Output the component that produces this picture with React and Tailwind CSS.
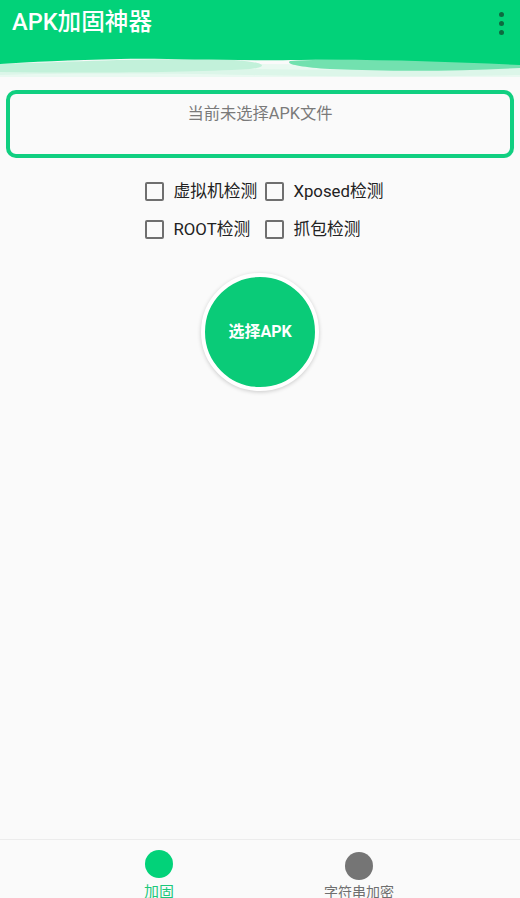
import React from "react";

const font = { fontFamily: "Roboto, 'Noto Sans CJK SC', sans-serif" };

function Check({ label }) {
  return (
    <label className="flex items-center gap-[9px]">
      <span className="h-[19px] w-[19px] shrink-0 rounded-[2px] border-2 border-[#6f6f6f]" />
      <span className="text-[16.8px] text-[#222]">{label}</span>
    </label>
  );
}

export default function App() {
  return (
    <div className="flex h-[898px] w-[520px] flex-col overflow-hidden bg-[#fafafa]" style={font}>
      {/* Toolbar */}
      <div className="flex h-[55px] items-start justify-between bg-[#02d279] pl-[12px] pr-[16px] pt-[6px]">
        <h1 className="text-[23.6px] leading-[32px] font-medium text-white">APK加固神器</h1>
        <div className="mt-[6px] flex flex-col gap-[4px]">
          <span className="h-[5px] w-[5px] rounded-full bg-[#0e6a40]" />
          <span className="h-[5px] w-[5px] rounded-full bg-[#0e6a40]" />
          <span className="h-[5px] w-[5px] rounded-full bg-[#0e6a40]" />
        </div>
      </div>
      <svg width="520" height="26" viewBox="0 0 520 26" className="block shrink-0">
        <rect x="0" y="0" width="520" height="26" fill="#fafafa" />
        <path d="M0 8 L520 10 L520 22 L0 22 Z" fill="#e9f9f1" />
        <path d="M0 9 C80 8 150 12 250 14 C330 16 420 14 520 12 L520 20 C420 22 330 22 250 20 C150 18 60 18 0 20 Z" fill="#dcf6e9" />
        <path d="M0 9 C60 7 120 4 200 4 C250 4 280 10 250 14 C180 18 80 18 0 17 Z" fill="#c2f1da" />
        <path d="M290 6 C340 3 430 4 520 9 L520 13 C460 16 400 17 330 14 C300 12 285 9 290 6 Z" fill="#72e1af" />
        <path d="M0 0 L520 0 L520 10 C450 7 380 4 300 5 C220 6 170 3 120 4 C70 5 30 7 0 9 Z" fill="#02d279" />
      </svg>

      {/* File box */}
      <div className="mx-[6px] mt-[9px] h-[68px] shrink-0 rounded-[10px] border-4 border-[#10cf80] bg-[#fafafa] pt-[8px] text-center">
        <span className="text-[16.3px] text-[#7a7a7a]">当前未选择APK文件</span>
      </div>

      {/* Options */}
      <div className="mt-[21px] flex justify-center pl-[9px]">
        <div className="grid grid-cols-[auto_auto] gap-x-[8px] gap-y-[13px]">
          <Check label="虚拟机检测" />
          <Check label="Xposed检测" />
          <Check label="ROOT检测" />
          <Check label="抓包检测" />
        </div>
      </div>

      {/* Select button */}
      <div className="mt-[31px] flex justify-center">
        <button className="flex h-[118px] w-[118px] items-center justify-center rounded-full border-[4px] border-white bg-[#0acb78] shadow-[0_1px_4px_rgba(0,0,0,0.2)]">
          <span className="text-[16px] font-bold text-white">选择APK</span>
        </button>
      </div>

      <div className="flex-1" />

      {/* Bottom nav */}
      <div className="flex h-[59px] shrink-0 border-t border-[#ececec] bg-[#fafafa] pl-[59px]">
        <div className="flex w-[200px] flex-col items-center pt-[10px]">
          <span className="h-[28px] w-[28px] shrink-0 rounded-full bg-[#02d279]" />
          <span className="mt-[4px] text-[15px] leading-[20px] text-[#1cc87a]">加固</span>
        </div>
        <div className="flex w-[200px] flex-col items-center pt-[12px]">
          <span className="h-[28px] w-[28px] shrink-0 rounded-full bg-[#757575]" />
          <span className="mt-[2px] text-[14px] leading-[20px] text-[#6f6f6f]">字符串加密</span>
        </div>
      </div>
    </div>
  );
}
